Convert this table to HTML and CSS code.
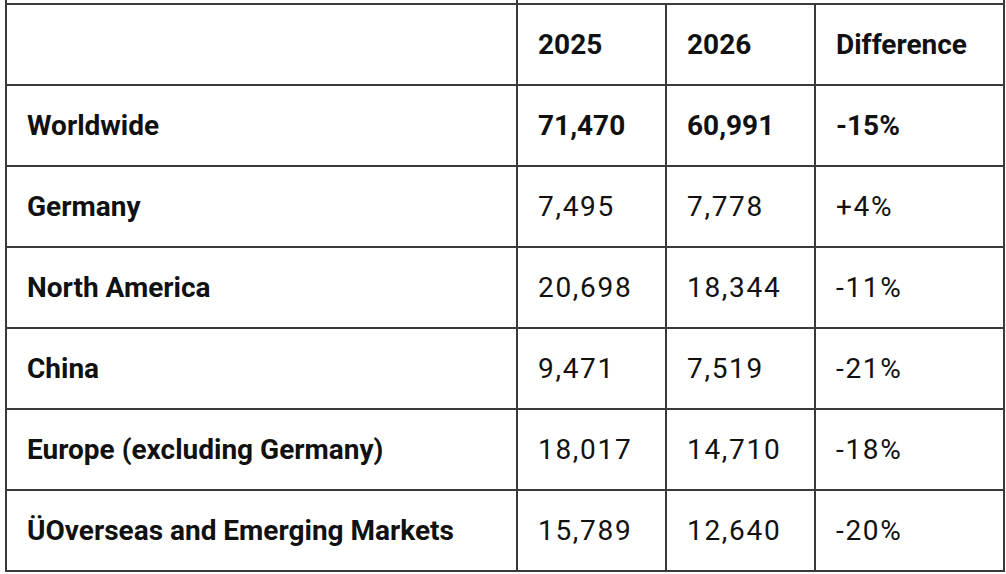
FILE: index.html
```html
<!DOCTYPE html>
<html lang="en">
<head>
<meta charset="utf-8">
<title>Deliveries</title>
<link rel="stylesheet" href="styles.css">
</head>
<body>
<div class="wrap">
<table class="deliveries">
  <colgroup>
    <col class="c-region">
    <col class="c-num">
    <col class="c-num">
    <col class="c-diff">
  </colgroup>
  <tbody>
    <tr class="stub"><td></td><td colspan="3"></td></tr>
    <tr class="head"><td></td><td>2025</td><td>2026</td><td>Difference</td></tr>
    <tr class="total"><td>Worldwide</td><td>71,470</td><td>60,991</td><td>-15%</td></tr>
    <tr><td>Germany</td><td>7,495</td><td>7,778</td><td>+4%</td></tr>
    <tr><td>North America</td><td>20,698</td><td>18,344</td><td>-11%</td></tr>
    <tr><td>China</td><td>9,471</td><td>7,519</td><td>-21%</td></tr>
    <tr><td>Europe (excluding Germany)</td><td>18,017</td><td>14,710</td><td>-18%</td></tr>
    <tr><td>ÜOverseas and Emerging Markets</td><td>15,789</td><td>12,640</td><td>-20%</td></tr>
  </tbody>
</table>
</div>
</body>
</html>
```
FILE: styles.css
```css
html, body {
  margin: 0;
  padding: 0;
  background: #ffffff;
}
.wrap {
  padding-left: 5px;
  overflow: hidden;
  height: 574px;
}
.deliveries {
  border-collapse: collapse;
  table-layout: fixed;
  width: 1000px;
  font-family: Roboto, "Liberation Sans", sans-serif;
  font-size: 28px;
  color: #111111;
}
.c-region { width: 511px; }
.c-num { width: 149px; }
.c-diff { width: 189px; }
.deliveries td {
  border: 2px solid #3a3a3a;
  padding: 0 20px;
  height: 79px;
  vertical-align: middle;
  white-space: nowrap;
  letter-spacing: 1.7px;
}
.deliveries td:first-child,
.deliveries .head td,
.deliveries .total td {
  font-weight: 700;
  letter-spacing: 0;
}
.deliveries .stub td {
  border-top: none;
  height: 3px;
  padding: 0;
}
```
